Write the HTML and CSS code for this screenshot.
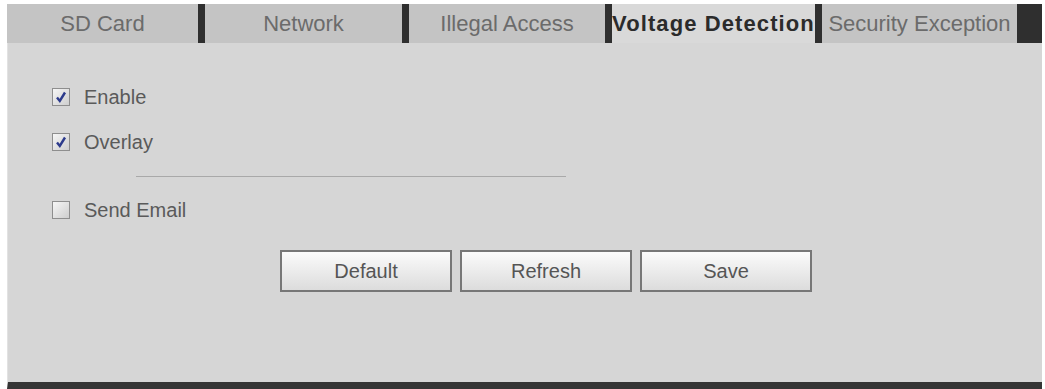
FILE: index.html
```html
<!DOCTYPE html>
<html lang="en">
<head>
    <meta charset="UTF-8">
    <title>Voltage Detection</title>
    <link rel="stylesheet" href="styles.css">
</head>
<body>

<div class="page">
    <!-- tab strip -->
    <div class="tabs">
        <div class="tab tab-sd">SD Card</div>
        <div class="tab tab-net">Network</div>
        <div class="tab tab-ill">Illegal Access</div>
        <div class="tab tab-volt active">Voltage Detection</div>
        <div class="tab tab-sec">Security Exception</div>
        <div class="tab-end"></div>
    </div>

    <div class="panel">
        <div class="options">
            <label class="row row-enable">
                <span class="box">
                    <svg width="16" height="16" viewBox="0 0 16 16"><path d="M4 8.5 L6.8 12 L12 3.5" fill="none" stroke="#2d3b8c" stroke-width="2.4"/></svg>
                </span>
                Enable
            </label>
            <label class="row row-overlay">
                <span class="box">
                    <svg width="16" height="16" viewBox="0 0 16 16"><path d="M4 8.5 L6.8 12 L12 3.5" fill="none" stroke="#2d3b8c" stroke-width="2.4"/></svg>
                </span>
                Overlay
            </label>

            <div class="divider"></div>

            <label class="row row-email">
                <span class="box"></span>
                Send Email
            </label>
        </div>

        <div class="buttons">
            <button class="btn">Default</button>
            <button class="btn">Refresh</button>
            <button class="btn">Save</button>
        </div>
    </div>
</div>

</body>
</html>
```

FILE: styles.css
```css
        body {
            margin: 0;
            background-color: white;
            font-family: "Liberation Sans", Arial, sans-serif;
        }
        .page {
            width: 1035px;
            padding: 4px 0 0 7px;
        }
        /* Tabs across the top */
        .tabs {
            display: flex;
            height: 39px;
        }
        .tab {
            background-color: #c4c4c4;
            color: #6b6b6b;
            font-size: 22px;
            line-height: 39px;
            text-align: center;
            white-space: nowrap;
            border-left: 7px solid #2f2f2f;
            box-sizing: border-box;
        }
        .tab-sd { width: 191px; border-left: none; }
        .tab-net { width: 204px; }
        .tab-ill { width: 203px; }
        .tab-volt { width: 210px; }
        .tab-sec { width: 202px; }
        .tab.active {
            background-color: #d9d9d9;
            color: #2b2b2b;
            font-weight: bold;
            letter-spacing: 1.1px;
            text-align: left;
            overflow: hidden;
        }
        .tab-end {
            flex: 1;
            background-color: #2f2f2f;
        }
        .panel {
            height: 346px;
            background-color: #d6d6d6;
            border-bottom: 7px solid #353535;
            border-left: 1px solid #e2e2e2;
            padding-top: 42px;
            box-sizing: border-box;
        }
        .options {
            padding-left: 44px;
        }
        .row {
            display: flex;
            align-items: center;
            height: 24px;
            font-size: 20px;
            color: #5a5a5a;
        }
        .row-overlay { margin-top: 21px; }
        .row-email { margin-top: 21px; }
        .box {
            width: 16px;
            height: 16px;
            margin-right: 14px;
            border: 1px solid #8e8e8e;
            background: linear-gradient(135deg, #f6f6f6, #cecece);
            display: flex;
            align-items: center;
            justify-content: center;
        }
        .box svg {
            display: block;
        }
        .divider {
            width: 430px;
            height: 1px;
            margin: 22px 0 0 84px;
            background-color: #a9a9a9;
        }
        .buttons {
            display: flex;
            gap: 8px;
            margin: 28px 0 0 272px;
        }
        .btn {
            width: 172px;
            height: 42px;
            border: 2px solid #777;
            background: linear-gradient(#fbfbfb, #dcdcdc);
            font-family: "Liberation Sans", Arial, sans-serif;
            font-size: 20px;
            color: #555;
            cursor: pointer;
        }
```
